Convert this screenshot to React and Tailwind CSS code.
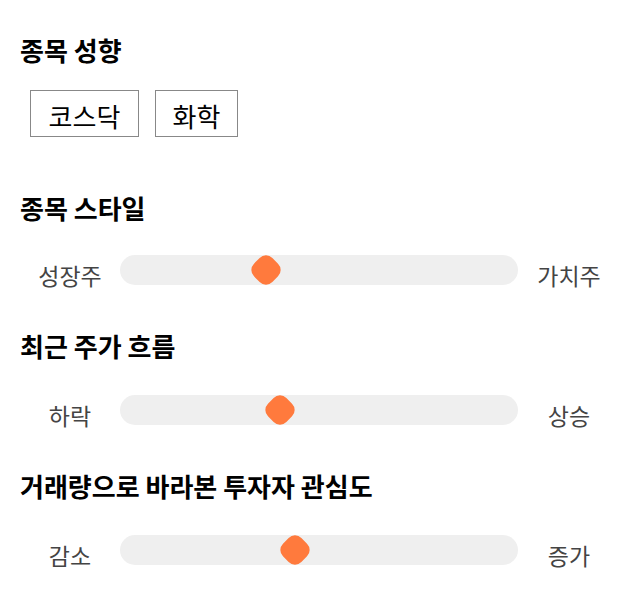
import React from "react";

const font = { fontFamily: '"Noto Sans CJK KR", "Noto Sans", sans-serif' };

function Slider({ left, right, value }) {
  return (
    <div className="flex items-center h-[30px]">
      <div className="w-[100px] text-center text-[23px] leading-[30px] text-[#444] translate-y-[5px]">{left}</div>
      <div className="relative w-[398px] h-[30px] bg-[#efefef] rounded-[15px]">
        <div
          className="absolute top-0 w-[30px] h-[30px] flex items-center justify-center"
          style={{ left: `${value * 398 - 15}px` }}
        >
          <div className="w-[26px] h-[26px] bg-[#ff7a3d] rounded-[9px] rotate-45" />
        </div>
      </div>
      <div className="w-[102px] text-center text-[23px] leading-[30px] text-[#444] translate-y-[5px]">{right}</div>
    </div>
  );
}

export default function App() {
  return (
    <div className="bg-white w-[640px] h-[606px] pl-[20px] pt-[34px]" style={font}>
      <h2 className="text-[26px] font-bold leading-[32px] text-black">종목 성향</h2>
      <div className="flex gap-[16px] ml-[10px] mt-[24px]">
        <button className="h-[47px] w-[109px] pt-[5px] border border-[#888] text-[26px] leading-[32px] text-black">코스닥</button>
        <button className="h-[47px] w-[83px] pt-[5px] border border-[#888] text-[26px] leading-[32px] text-black">화학</button>
      </div>

      <h2 className="text-[26px] font-bold leading-[32px] text-black mt-[55px]">종목 스타일</h2>
      <div className="mt-[31px]">
        <Slider left="성장주" right="가치주" value={0.367} />
      </div>

      <h2 className="text-[26px] font-bold leading-[32px] text-black mt-[45px]">최근 주가 흐름</h2>
      <div className="mt-[33px]">
        <Slider left="하락" right="상승" value={0.402} />
      </div>

      <h2 className="text-[26px] font-bold leading-[32px] text-black mt-[45px]">거래량으로 바라본 투자자 관심도</h2>
      <div className="mt-[33px]">
        <Slider left="감소" right="증가" value={0.44} />
      </div>
    </div>
  );
}
